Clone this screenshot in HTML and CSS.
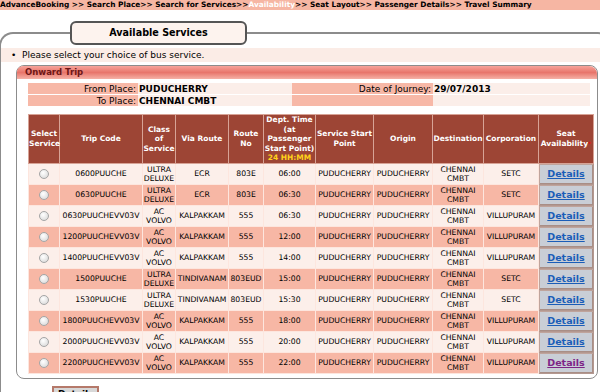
FILE: index.html
```html
<!DOCTYPE html>
<html lang="en">
  <head>
    <meta charset="UTF-8" />
    <title>Available Services</title>
    <link rel="stylesheet" href="styles.css">
  </head>
  <body>
    <div class="crumbs">
      AdvanceBooking &gt;&gt; Search Place&gt;&gt; Search for Services&gt;&gt;<span class="current">Availability</span>&gt;&gt; Seat Layout&gt;&gt; Passenger Details&gt;&gt; Travel Summary
    </div>

    <div class="services">
      <div class="services-title">Available Services</div>

      <div class="note">&bull;&nbsp; Please select your choice of bus service.</div>

      <div class="trip">
        <div class="trip-head">Onward Trip</div>

        <table class="places">
          <colgroup>
            <col style="width: 110px" />
            <col style="width: 154px" />
            <col style="width: 141px" />
            <col style="width: 157px" />
          </colgroup>
          <tr>
            <td class="lbl">From Place:</td>
            <td class="val">PUDUCHERRY</td>
            <td class="lbl">Date of Journey:</td>
            <td class="val">29/07/2013</td>
          </tr>
          <tr>
            <td class="lbl">To Place:</td>
            <td class="val">CHENNAI CMBT</td>
            <td class="lbl"></td>
            <td class="val"></td>
          </tr>
        </table>

        <table class="buses">
          <colgroup>
            <col style="width: 31px" />
            <col style="width: 83px" />
            <col style="width: 33px" />
            <col style="width: 53px" />
            <col style="width: 35px" />
            <col style="width: 52px" />
            <col style="width: 58px" />
            <col style="width: 59px" />
            <col style="width: 51px" />
            <col style="width: 55px" />
            <col style="width: 55px" />
          </colgroup>
          <thead>
            <tr>
              <th>Select Service</th>
              <th>Trip Code</th>
              <th>Class of Service</th>
              <th>Via Route</th>
              <th>Route No</th>
              <th>Dept. Time (at Passenger Start Point)<br /><span class="hint">24 HH:MM</span></th>
              <th>Service Start Point</th>
              <th>Origin</th>
              <th>Destination</th>
              <th>Corporation</th>
              <th>Seat Availability<span class="req">*</span></th>
            </tr>
          </thead>
          <tbody>
            <tr>
              <td><span class="radio"></span></td>
              <td>0600PUUCHE</td>
              <td>ULTRA DELUXE</td>
              <td>ECR</td>
              <td>803E</td>
              <td>06:00</td>
              <td>PUDUCHERRY</td>
              <td>PUDUCHERRY</td>
              <td>CHENNAI CMBT</td>
              <td>SETC</td>
              <td class="seat"><a href="#">Details</a></td>
            </tr>
            <tr>
              <td><span class="radio"></span></td>
              <td>0630PUUCHE</td>
              <td>ULTRA DELUXE</td>
              <td>ECR</td>
              <td>803E</td>
              <td>06:30</td>
              <td>PUDUCHERRY</td>
              <td>PUDUCHERRY</td>
              <td>CHENNAI CMBT</td>
              <td>SETC</td>
              <td class="seat"><a href="#">Details</a></td>
            </tr>
            <tr>
              <td><span class="radio"></span></td>
              <td>0630PUUCHEVV03V</td>
              <td>AC VOLVO</td>
              <td>KALPAKKAM</td>
              <td>555</td>
              <td>06:30</td>
              <td>PUDUCHERRY</td>
              <td>PUDUCHERRY</td>
              <td>CHENNAI CMBT</td>
              <td>VILLUPURAM</td>
              <td class="seat"><a href="#">Details</a></td>
            </tr>
            <tr>
              <td><span class="radio"></span></td>
              <td>1200PUUCHEVV03V</td>
              <td>AC VOLVO</td>
              <td>KALPAKKAM</td>
              <td>555</td>
              <td>12:00</td>
              <td>PUDUCHERRY</td>
              <td>PUDUCHERRY</td>
              <td>CHENNAI CMBT</td>
              <td>VILLUPURAM</td>
              <td class="seat"><a href="#">Details</a></td>
            </tr>
            <tr>
              <td><span class="radio"></span></td>
              <td>1400PUUCHEVV03V</td>
              <td>AC VOLVO</td>
              <td>KALPAKKAM</td>
              <td>555</td>
              <td>14:00</td>
              <td>PUDUCHERRY</td>
              <td>PUDUCHERRY</td>
              <td>CHENNAI CMBT</td>
              <td>VILLUPURAM</td>
              <td class="seat"><a href="#">Details</a></td>
            </tr>
            <tr>
              <td><span class="radio"></span></td>
              <td>1500PUUCHE</td>
              <td>ULTRA DELUXE</td>
              <td>TINDIVANAM</td>
              <td>803EUD</td>
              <td>15:00</td>
              <td>PUDUCHERRY</td>
              <td>PUDUCHERRY</td>
              <td>CHENNAI CMBT</td>
              <td>SETC</td>
              <td class="seat"><a href="#">Details</a></td>
            </tr>
            <tr>
              <td><span class="radio"></span></td>
              <td>1530PUUCHE</td>
              <td>ULTRA DELUXE</td>
              <td>TINDIVANAM</td>
              <td>803EUD</td>
              <td>15:30</td>
              <td>PUDUCHERRY</td>
              <td>PUDUCHERRY</td>
              <td>CHENNAI CMBT</td>
              <td>SETC</td>
              <td class="seat"><a href="#">Details</a></td>
            </tr>
            <tr>
              <td><span class="radio"></span></td>
              <td>1800PUUCHEVV03V</td>
              <td>AC VOLVO</td>
              <td>KALPAKKAM</td>
              <td>555</td>
              <td>18:00</td>
              <td>PUDUCHERRY</td>
              <td>PUDUCHERRY</td>
              <td>CHENNAI CMBT</td>
              <td>VILLUPURAM</td>
              <td class="seat"><a href="#">Details</a></td>
            </tr>
            <tr>
              <td><span class="radio"></span></td>
              <td>2000PUUCHEVV03V</td>
              <td>AC VOLVO</td>
              <td>KALPAKKAM</td>
              <td>555</td>
              <td>20:00</td>
              <td>PUDUCHERRY</td>
              <td>PUDUCHERRY</td>
              <td>CHENNAI CMBT</td>
              <td>VILLUPURAM</td>
              <td class="seat"><a href="#">Details</a></td>
            </tr>
            <tr>
              <td><span class="radio"></span></td>
              <td>2200PUUCHEVV03V</td>
              <td>AC VOLVO</td>
              <td>KALPAKKAM</td>
              <td>555</td>
              <td>22:00</td>
              <td>PUDUCHERRY</td>
              <td>PUDUCHERRY</td>
              <td>CHENNAI CMBT</td>
              <td>VILLUPURAM</td>
              <td class="seat"><a href="#" class="visited">Details</a></td>
            </tr>
          </tbody>
        </table>
      </div>

      <div class="actions">
        <button>Details</button>
      </div>
    </div>
  </body>
</html>
```

FILE: styles.css
```css
body {
  font-family: "DejaVu Sans", Verdana, sans-serif;
  font-size: 8px;
  color: #000;
  background: #fff;
  margin: 0;
  width: 600px;
  overflow: hidden;
}

.crumbs {
  background: #f6b6a3;
  height: 10px;
  line-height: 9px;
  font-size: 7.4px;
  font-weight: bold;
  white-space: nowrap;
}

.crumbs .current {
  color: #fff;
}

.services {
  margin: 22px -12px 0 -1px;
  border: 2px solid #8c8c8c;
  border-bottom: none;
  border-radius: 14px 14px 0 0;
}

.services-title {
  margin: -13px 0 0 69px;
  width: 177px;
  height: 24px;
  box-sizing: border-box;
  border: 2px solid #555;
  border-radius: 6px;
  background: #fdf3ee;
  text-align: center;
  font-size: 9.6px;
  font-weight: bold;
  line-height: 20px;
}

.note {
  margin-top: 3px;
  background: #fbece6;
  height: 14px;
  line-height: 14px;
  font-size: 9px;
  padding-left: 10px;
}

.trip {
  margin: 3px 12px 0 15px;
  border: 1px solid #8c8c8c;
  border-radius: 8px;
  padding: 0 5px 4px 11px;
}

.trip-head {
  margin: 0 -5px 0 -11px;
  height: 13px;
  line-height: 13px;
  padding-left: 8px;
  border-radius: 6px 8px 0 0;
  background: linear-gradient(#f7a49b, #e8756b 50%, #f5b1a6);
  color: #6e1616;
  font-size: 8.5px;
  font-weight: bold;
}

.places {
  margin-top: 4px;
  width: 562px;
  border-collapse: collapse;
  table-layout: fixed;
  font-size: 9px;
}

.places td {
  height: 11px;
  padding: 0 2px 0 1px;
  border-bottom: 1px solid #fff;
  white-space: nowrap;
}

.places .lbl {
  background: #f7b8a7;
  text-align: right;
}

.places .val {
  background: #fbeee9;
  font-weight: bold;
}

.buses {
  margin-top: 7px;
  width: 565px;
  border-collapse: collapse;
  table-layout: fixed;
  text-align: center;
}

.buses th {
  background: #9d4535;
  color: #fff;
  font-size: 7.5px;
  font-weight: bold;
  line-height: 9.5px;
  height: 47px;
  padding: 0;
  border: 1px solid #d7a396;
}

.buses .hint {
  color: #ffd21a;
}

.buses .req {
  color: #e01010;
  font-size: 6px;
  vertical-align: top;
}

.buses td {
  height: 20px;
  padding: 0;
  font-size: 7.7px;
  line-height: 9px;
  border: 1px solid #fde6de;
}

.buses tbody tr:nth-child(odd) td {
  background: #fcefea;
}

.buses tbody tr:nth-child(even) td {
  background: #f7b7a5;
}

.buses tbody tr td.seat {
  background: #c9ced6;
  border: 1px solid #b39890;
  box-shadow: inset 1px 1px 0 #bfa49c, inset -1px -1px 0 #a88e86;
}

.seat a {
  color: #1a5db8;
  font-size: 9.5px;
  font-weight: bold;
}

.seat a.visited {
  color: #7d2486;
}

.radio {
  display: inline-block;
  width: 8px;
  height: 8px;
  border: 1px solid #a5a5a5;
  border-radius: 50%;
  background: radial-gradient(circle at 40% 35%, #fff, #d4d4d4);
  vertical-align: middle;
}

.actions {
  padding: 7px 0 0 51px;
}

.actions button {
  font-family: "DejaVu Sans", Verdana, sans-serif;
  font-size: 9px;
  font-weight: bold;
  padding: 1px 4px;
  background: #d8d8d8;
  border: 2px solid #b5796a;
}
```
